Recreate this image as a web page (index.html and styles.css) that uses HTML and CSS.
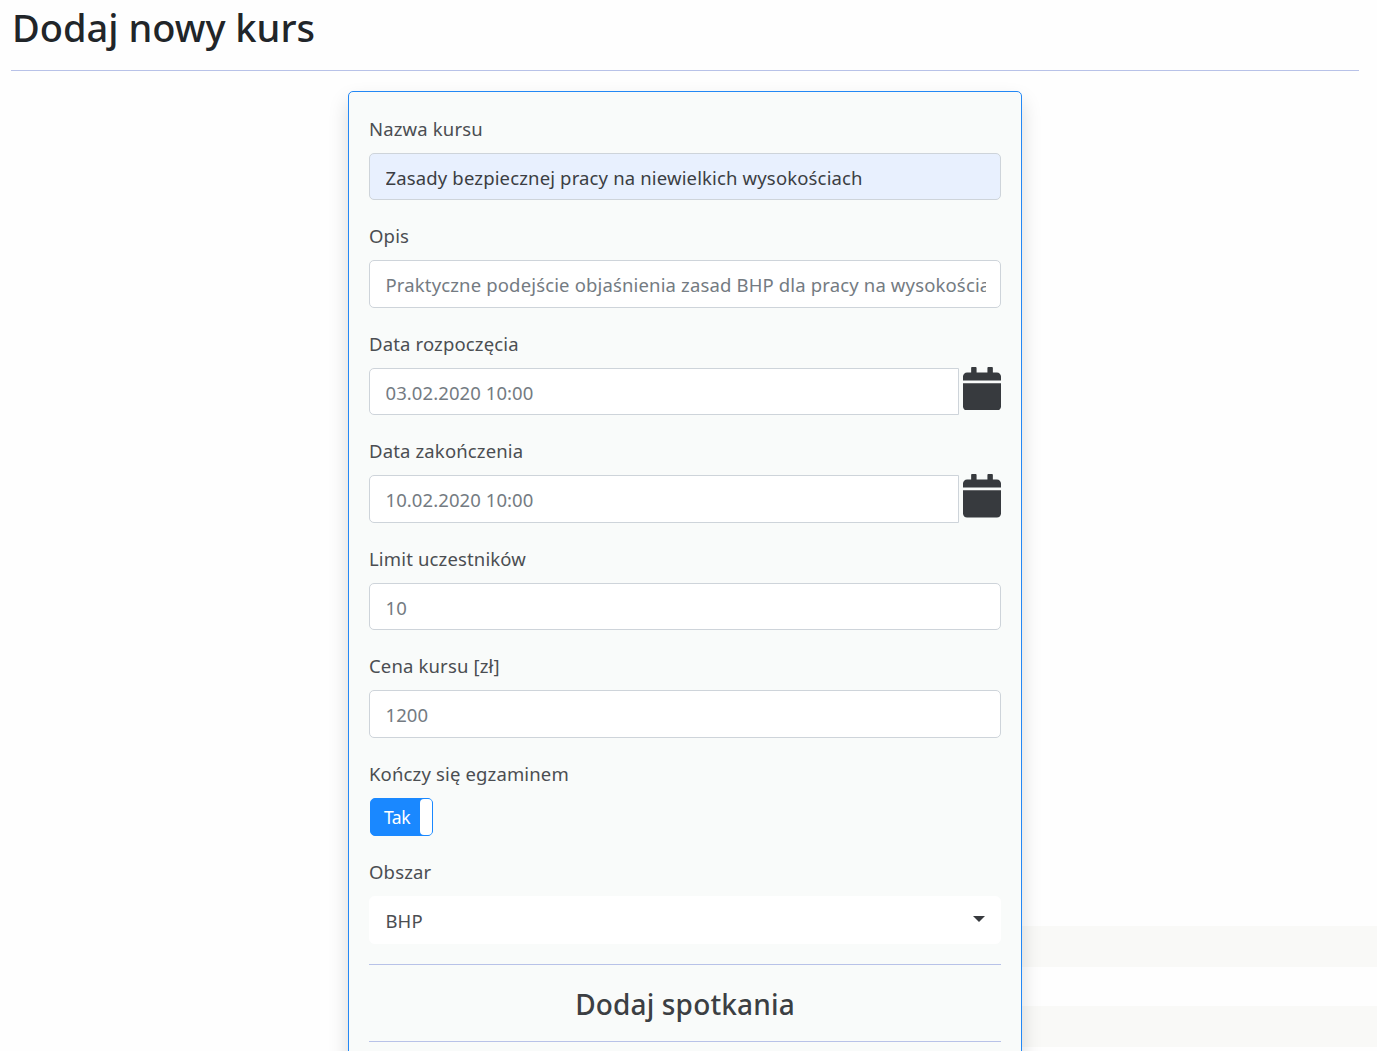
FILE: index.html
```html
<!DOCTYPE html>
<html lang="pl">
<head>
<meta charset="utf-8">
<title>Dodaj nowy kurs</title>
<link rel="stylesheet" href="styles.css">
</head>
<body>
<main class="page">
  <h1 class="page-title">Dodaj nowy kurs</h1>
  <form class="card">
    <div class="field">
      <label>Nazwa kursu</label>
      <div class="control filled"><span class="value">Zasady bezpiecznej pracy na niewielkich wysokościach</span></div>
    </div>
    <div class="field">
      <label>Opis</label>
      <div class="control"><span class="value">Praktyczne podejście objaśnienia zasad BHP dla pracy na wysokościach</span></div>
    </div>
    <div class="field">
      <label>Data rozpoczęcia</label>
      <div class="date-row">
        <div class="control date"><span class="value digits">03.02.2020 10:00</span></div>
        <svg class="calendar" viewBox="0 0 448 512" preserveAspectRatio="none"><path d="M0 464c0 26.500 21.500 48 48 48h352c26.500 0 48-21.500 48-48V192H0v272zM448 160v-48c0-26.500-21.500-48-48-48h-48V12c0-6.600-5.400-12-12-12h-40c-6.600 0-12 5.400-12 12v52H160V12c0-6.600-5.400-12-12-12h-40c-6.600 0-12 5.400-12 12v52H48C21.500 64 0 85.500 0 112v48h448z"/></svg>
      </div>
    </div>
    <div class="field">
      <label>Data zakończenia</label>
      <div class="date-row">
        <div class="control date"><span class="value digits">10.02.2020 10:00</span></div>
        <svg class="calendar" viewBox="0 0 448 512" preserveAspectRatio="none"><path d="M0 464c0 26.500 21.500 48 48 48h352c26.500 0 48-21.500 48-48V192H0v272zM448 160v-48c0-26.500-21.500-48-48-48h-48V12c0-6.600-5.400-12-12-12h-40c-6.600 0-12 5.400-12 12v52H160V12c0-6.600-5.400-12-12-12h-40c-6.600 0-12 5.400-12 12v52H48C21.500 64 0 85.500 0 112v48h448z"/></svg>
      </div>
    </div>
    <div class="field">
      <label>Limit uczestników</label>
      <div class="control"><span class="value digits">10</span></div>
    </div>
    <div class="field">
      <label>Cena kursu [zł]</label>
      <div class="control"><span class="value digits">1200</span></div>
    </div>
    <div class="field">
      <label>Kończy się egzaminem</label>
      <div class="toggle"><span class="toggle-on">Tak</span><span class="toggle-handle"></span></div>
    </div>
    <div class="field">
      <label>Obszar</label>
      <div class="control select"><span class="value digits">BHP</span><svg class="caret" viewBox="0 0 12 6"><path d="M0 0h12L6 6z"/></svg></div>
    </div>
    <h2 class="section-title">Dodaj spotkania</h2>
  </form>
</main>
</body>
</html>
```
FILE: styles.css
```css
* { box-sizing: border-box; }
body {
  margin: 0;
  height: 1051px;
  overflow: hidden;
  font-family: "Noto Sans", "Open Sans", sans-serif;
  font-size: 18.5px;
  line-height: 30px;
  letter-spacing: .15px;
  color: #4b4e52;
  background:
    linear-gradient(#f9f9f7, #f9f9f7) 1022px 926px / 355px 41px no-repeat,
    linear-gradient(#f9f9f7, #f9f9f7) 1022px 1006px / 355px 41px no-repeat,
    #fefefe;
}
.page { padding: 0 18px 0 11px; }
.page-title {
  margin: 0 0 20px;
  height: 71px;
  padding: 3px 0 0 1px;
  font-size: 38px;
  font-weight: 500;
  line-height: 48px;
  letter-spacing: 0;
  color: #212529;
  border-bottom: 1px solid #b8c2e8;
}
.card {
  width: 674px;
  height: 1000px;
  margin: 0 auto;
  padding: 20.7px 20px;
  background: #f9fbfa;
  border: 1px solid #2388f5;
  border-radius: 5px;
  box-shadow: 0 10px 20px rgba(0, 0, 0, .15);
}
.field { margin-bottom: 20px; }
label { display: block; height: 40px; padding-top: 1px; }
.control {
  display: flex;
  align-items: center;
  height: 47.5px;
  padding: 2.6px 14px 0 15.5px;
  color: #747b82;
  background: #fff;
  border: 1px solid #ced4da;
  border-radius: 5px;
}
.value { flex: 1; overflow: hidden; white-space: nowrap; }
.digits { letter-spacing: .08px; }
.filled { color: #3b3e43; background: #e8f0fe; }
.date-row { display: flex; gap: 4.5px; }
.date { flex: 1; border-radius: 5px 0 0 5px; }
.calendar { width: 38px; height: 43.5px; margin-top: -.8px; fill: #373a3e; }
.toggle {
  display: flex;
  width: 63px;
  height: 38.3px;
  margin-left: 1px;
  color: #fff;
  background: #1a88ff;
  border: 1px solid #1a88ff;
  border-radius: 5px;
}
.toggle-on { flex: 1; padding: 3px 0 0 13px; font-size: 17.5px; letter-spacing: -.5px; }
.toggle-handle { width: 12px; background: #fff; border-radius: 4px; }
.select { height: 48.2px; padding-top: 2px; color: #4b4e52; border-color: #fff; }
.caret { width: 12px; height: 6px; margin: -4px 1px 0 0; fill: #373a3e; }
.section-title {
  height: 78px;
  margin: 0;
  padding-top: 19px;
  color: #3c3f43;
  font-size: 28px;
  font-weight: 500;
  line-height: 40px;
  text-align: center;
  border-top: 1px solid #b8c2e8;
  border-bottom: 1px solid #b8c2e8;
}
```
